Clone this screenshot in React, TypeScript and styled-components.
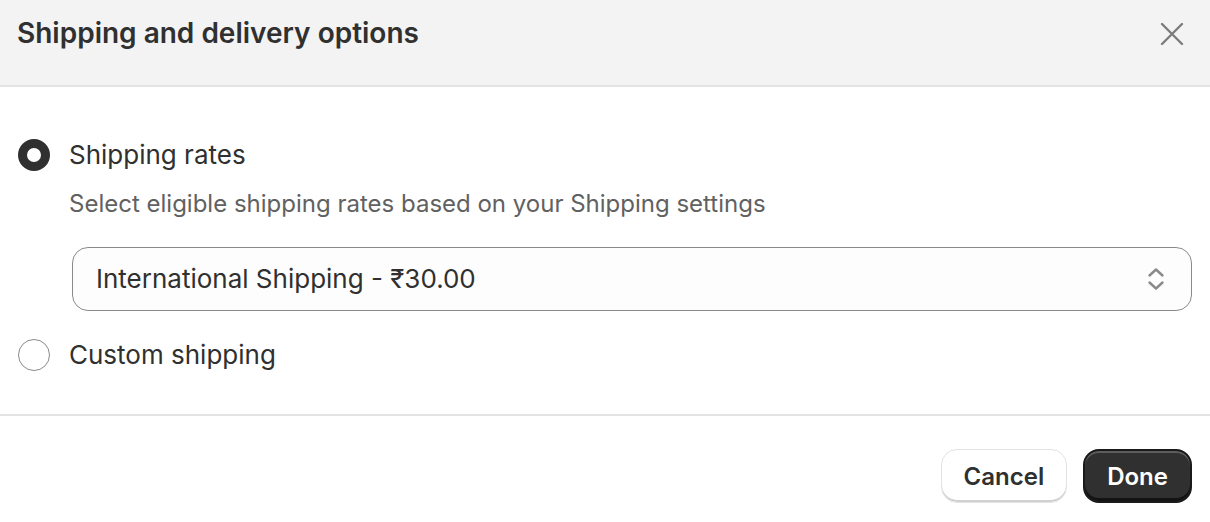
import React from 'react';

import styled, { createGlobalStyle } from 'styled-components';

const GlobalStyle = createGlobalStyle`
  html, body {
    margin: 0;
    padding: 0;
    background: #ffffff;
  }
  body {
    font-family: Inter, "Noto Sans", "Liberation Sans", sans-serif;
    color: #303030;
  }
`;

const CloseIcon = () => (
  <svg width="24" height="24" viewBox="0 0 24 24" fill="none">
    <path d="M2 2L22 22M22 2L2 22" stroke="#7c7c7c" strokeWidth="2.4" strokeLinecap="round" />
  </svg>
);

const SelectIcon = () => (
  <svg width="18" height="24" viewBox="0 0 18 24" fill="none">
    <path
      d="M2.5 8.5L9 2.5L15.5 8.5M2.5 15.5L9 21.5L15.5 15.5"
      stroke="#8a8a8a"
      strokeWidth="2.4"
      strokeLinecap="round"
      strokeLinejoin="round"
    />
  </svg>
);

export default function App() {
  return (
    <>
      <GlobalStyle />
      <Modal>
        <Header>
          <Title>Shipping and delivery options</Title>
          <CloseButton aria-label="Close">
            <CloseIcon />
          </CloseButton>
        </Header>
        <Body>
          <OptionRow>
            <Radio checked />
            <OptionLabel>Shipping rates</OptionLabel>
          </OptionRow>
          <HelpText>Select eligible shipping rates based on your Shipping settings</HelpText>
          <SelectBox>
            <SelectValue>International Shipping - ₹30.00</SelectValue>
            <SelectIcon />
          </SelectBox>
          <OptionRow $spaced>
            <Radio />
            <OptionLabel>Custom shipping</OptionLabel>
          </OptionRow>
        </Body>
        <Footer>
          <Button>Cancel</Button>
          <Button $primary>Done</Button>
        </Footer>
      </Modal>
    </>
  );
}

const Modal = styled.div`
  width: 1210px;
  height: 522px;
  display: flex;
  flex-direction: column;
  background: #ffffff;
  overflow: hidden;
`;

const Header = styled.div`
  height: 87px;
  box-sizing: border-box;
  display: flex;
  align-items: flex-start;
  justify-content: space-between;
  padding: 15px 26px 0 17px;
  background: #f3f3f3;
  border-bottom: 2px solid #e3e3e3;
`;

const Title = styled.h1`
  margin: 0;
  font-size: 28px;
  line-height: 36px;
  font-weight: 600;
  color: #303030;
`;

const CloseButton = styled.button`
  display: flex;
  align-items: center;
  justify-content: center;
  width: 24px;
  height: 24px;
  margin-top: 7px;
  padding: 0;
  border: none;
  background: transparent;
`;

const Body = styled.div`
  display: flex;
  flex-direction: column;
  padding: 52px 18px 43px 18px;
  border-bottom: 2px solid #e3e3e3;
`;

const OptionRow = styled.div<{ $spaced?: boolean }>`
  display: flex;
  align-items: center;
  gap: 19px;
  height: 32px;
  margin-top: ${(p) => (p.$spaced ? '28px' : '0')};
`;

const Radio = styled.span<{ checked?: boolean }>`
  width: 32px;
  height: 32px;
  box-sizing: border-box;
  border-radius: 50%;
  flex-shrink: 0;
  background: #ffffff;
  border: ${(p) => (p.checked ? '9px solid #303030' : '1.5px solid #8a8a8a')};
`;

const OptionLabel = styled.span`
  font-size: 26px;
  line-height: 32px;
  color: #303030;
`;

const HelpText = styled.p`
  margin: 17px 0 0 51px;
  font-size: 24px;
  line-height: 32px;
  color: #616161;
`;

const SelectBox = styled.div`
  margin: 27px 0 0 54px;
  height: 64px;
  box-sizing: border-box;
  display: flex;
  align-items: center;
  justify-content: space-between;
  padding: 0 26px 0 23px;
  border: 1.5px solid #8a8a8a;
  border-radius: 16px;
  background: #fdfdfd;
`;

const SelectValue = styled.span`
  font-size: 26px;
  line-height: 32px;
  color: #303030;
`;

const Footer = styled.div`
  display: flex;
  justify-content: flex-end;
  gap: 16px;
  padding: 33px 18px 0 0;
`;

const Button = styled.button<{ $primary?: boolean }>`
  height: 54px;
  box-sizing: border-box;
  padding: 0 ${(p) => (p.$primary ? '22px' : '22px')};
  border-radius: 16px;
  font-family: inherit;
  font-size: 24px;
  font-weight: 600;
  cursor: pointer;
  color: ${(p) => (p.$primary ? '#ffffff' : '#303030')};
  background: ${(p) => (p.$primary ? '#303030' : '#ffffff')};
  border: ${(p) => (p.$primary ? '2px solid #1a1a1a' : '1.5px solid #e3e3e3')};
  box-shadow: ${(p) =>
    p.$primary
      ? 'inset 0 2px 0 rgba(255,255,255,0.22), inset 0 -3px 0 rgba(0,0,0,0.6)'
      : 'inset 0 -2px 0 #d0d0d0'};
`;
